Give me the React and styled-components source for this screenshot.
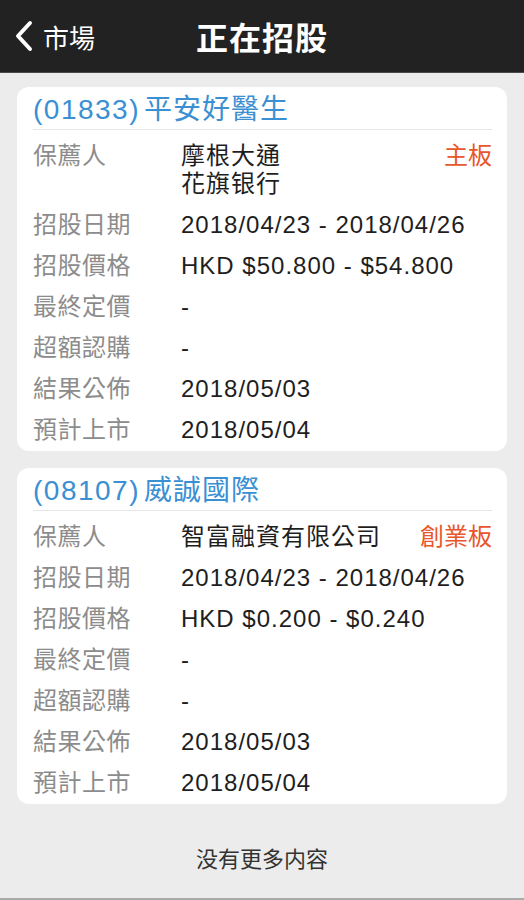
import React from "react";
import styled, { createGlobalStyle } from "styled-components";

const GlobalStyle = createGlobalStyle`
	html, body {
		margin: 0;
		padding: 0;
		background: #ececec;
	}
	body {
		font-family: "Liberation Sans", "Noto Sans CJK TC", sans-serif;
	}
`;

const Page = styled.div`
	display: flex;
	flex-direction: column;
	height: 900px;
	background: #ececec;
	overflow: hidden;
`;

const Header = styled.header`
	display: grid;
	grid-template-columns: 1fr auto 1fr;
	align-items: center;
	height: 72px;
	padding: 0 14px;
	background: #222222;
	border-bottom: 1px solid #4a4a4a;
	flex-shrink: 0;
`;

const BackButton = styled.div`
	display: flex;
	align-items: center;
	gap: 9px;
	color: #ffffff;
	font-size: 26px;
	justify-self: start;
`;

const Title = styled.h1`
	margin: 0;
	color: #ffffff;
	font-size: 32px;
	font-weight: 700;
	letter-spacing: 1px;
`;

const List = styled.div`
	display: flex;
	flex-direction: column;
	gap: 17px;
	padding: 14px 17px 0;
`;

const Card = styled.section`
	background: #ffffff;
	border-radius: 12px;
	padding: 0 15px 1px 16px;
`;

const CardTitle = styled.div`
	height: 38px;
	padding-top: 4px;
	line-height: 38px;
	font-size: 28px;
	color: #3b8fd3;
	border-bottom: 1px solid #e6e6e6;
	white-space: nowrap;
`;

const Code = styled.span`
	letter-spacing: 1.5px;
	margin-right: 4px;
`;

const Name = styled.span`
	letter-spacing: 1px;
`;

const Rows = styled.div`
	padding-top: 5px;
`;

const Row = styled.div`
	display: grid;
	grid-template-columns: 148px 1fr auto;
	padding: 7px 0 6px;
	line-height: 28px;
	font-size: 24px;
`;

const Label = styled.div`
	color: #8c8c8c;
	letter-spacing: 0.5px;
`;

const Value = styled.div`
	color: #1e1e1e;
	letter-spacing: 1px;
`;

const Board = styled.div`
	color: #e8562a;
	text-align: right;
`;

const Footer = styled.div`
	margin-top: 41px;
	text-align: center;
	font-size: 22px;
	line-height: 30px;
	color: #333333;
`;

const BottomEdge = styled.div`
	margin-top: auto;
	height: 2px;
	background: #a9a9a9;
`;

const Chevron = () => (
	<svg width="20" height="34" viewBox="0 0 20 34">
		<polyline
			points="16,4 4,17 16,30"
			fill="none"
			stroke="#ffffff"
			strokeWidth="4"
			strokeLinecap="round"
			strokeLinejoin="round"
		/>
	</svg>
);

const ipos = [
	{
		code: "01833",
		name: "平安好醫生",
		board: "主板",
		sponsors: ["摩根大通", "花旗银行"],
		period: "2018/04/23 - 2018/04/26",
		price: "HKD $50.800 - $54.800",
		result: "2018/05/03",
		listing: "2018/05/04"
	},
	{
		code: "08107",
		name: "威誠國際",
		board: "創業板",
		sponsors: ["智富融資有限公司"],
		period: "2018/04/23 - 2018/04/26",
		price: "HKD $0.200 - $0.240",
		result: "2018/05/03",
		listing: "2018/05/04"
	}
];

const IpoCard = ({ ipo }) => {
	const rows = [
		["招股日期", ipo.period],
		["招股價格", ipo.price],
		["最終定價", "-"],
		["超額認購", "-"],
		["結果公佈", ipo.result],
		["預計上市", ipo.listing]
	];
	return (
		<Card>
			<CardTitle>
				<Code>({ipo.code})</Code>
				<Name>{ipo.name}</Name>
			</CardTitle>
			<Rows>
				<Row>
					<Label>保薦人</Label>
					<Value>
						{ipo.sponsors.map(s => (
							<div key={s}>{s}</div>
						))}
					</Value>
					<Board>{ipo.board}</Board>
				</Row>
				{rows.map(([label, value]) => (
					<Row key={label}>
						<Label>{label}</Label>
						<Value>{value}</Value>
					</Row>
				))}
			</Rows>
		</Card>
	);
};

export default function App() {
	return (
		<Page>
			<GlobalStyle />
			<Header>
				<BackButton>
					<Chevron />
					市場
				</BackButton>
				<Title>正在招股</Title>
			</Header>
			<List>
				{ipos.map(ipo => (
					<IpoCard key={ipo.code} ipo={ipo} />
				))}
			</List>
			<Footer>没有更多内容</Footer>
			<BottomEdge />
		</Page>
	);
}
